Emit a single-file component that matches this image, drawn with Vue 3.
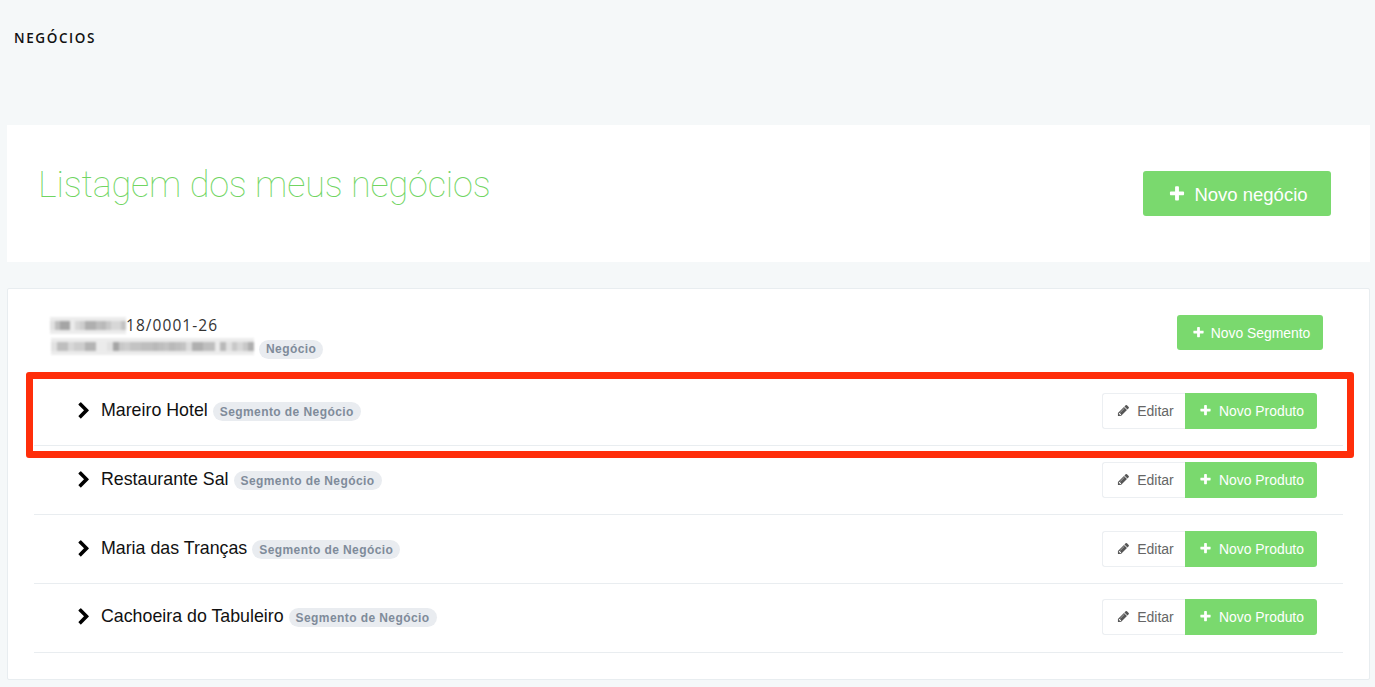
<script setup>
const plus = "M1600 736v192q0 40-28 68t-68 28h-416v416q0 40-28 68t-68 28h-192q-40 0-68-28t-28-68v-416h-416q-40 0-68-28t-28-68v-192q0-40 28-68t68-28h416v-416q0-40 28-68t68-28h192q40 0 68 28t28 68v416h416q40 0 68 28t28 68z";
const pencil = "M491 1536l91-91-235-235-91 91v107h128v128h107zm523-928q0-22-22-22-10 0-17 7l-542 542q-7 7-7 17 0 22 22 22 10 0 17-7l542-542q7-7 7-17zm-54-192l416 416-832 832h-416v-416zm683 96q0 53-37 90l-166 166-416-416 166-165q36-38 90-38 53 0 91 38l235 234q37 39 37 91z";
const chevron = "M1363 877l-742 742q-19 19-45 19t-45-19l-166-166q-19-19-19-45t19-45l531-531-531-531q-19-19-19-45t19-45l166-166q19-19 45-19t45 19l742 742q19 19 19 45t-19 45z";

const segmentos = ["Mareiro Hotel", "Restaurante Sal", "Maria das Tranças", "Cachoeira do Tabuleiro"];

// pixelated redaction, one grey value per block
const blurLine1 = [225, 190, 165, 165, 235, 215, 205, 175, 175, 190, 185, 200, 215, 215, 195];
const blurLine2 = [
  225, 190, 190, 215, 205, 205, 180, 180, 235, 235, 225, 165, 200, 205, 195, 195, 190, 190, 185, 190,
  195, 185, 190, 195, 220, 175, 175, 190, 190, 235, 185, 225, 200, 215, 200, 175,
];

const grey = (v) => ({ background: `rgb(${v},${v},${v})` });
</script>

<template>
  <div class="page">
    <div class="crumb">NEGÓCIOS</div>

    <section class="hero">
      <h1>Listagem dos meus negócios</h1>
      <button class="btn btn-lg">
        <svg viewBox="0 0 1792 1792"><path :d="plus" /></svg>
        <span>Novo negócio</span>
      </button>
    </section>

    <section class="card">
      <header class="biz">
        <div class="biz-info">
          <div class="biz-doc">
            <span class="redact r1"><i v-for="(v, i) in blurLine1" :key="i" :style="grey(v)"></i></span>18/0001-26
          </div>
          <div class="biz-name">
            <span class="redact r2"><i v-for="(v, i) in blurLine2" :key="i" :style="grey(v)"></i></span>
            <span class="tag">Negócio</span>
          </div>
        </div>
        <button class="btn btn-md">
          <svg viewBox="0 0 1792 1792"><path :d="plus" /></svg>
          Novo Segmento
        </button>
      </header>

      <ul class="list">
        <li v-for="s in segmentos" :key="s" class="row">
          <svg class="chev" viewBox="0 0 1792 1792"><path :d="chevron" /></svg>
          <span class="row-name">{{ s }}</span>
          <span class="tag">Segmento de Negócio</span>
          <div class="actions">
            <button class="edit">
              <svg viewBox="0 0 1792 1792"><path :d="pencil" /></svg>
              Editar
            </button>
            <button class="btn btn-sm">
              <svg viewBox="0 0 1792 1792"><path :d="plus" /></svg>
              Novo Produto
            </button>
          </div>
        </li>
      </ul>
    </section>

    <div class="highlight"></div>
  </div>
</template>

<style scoped>
.page {
  position: relative;
  height: 687px;
  overflow: hidden;
  padding: 31px 5px 0 7px;
  box-sizing: border-box;
  background: #f5f8f9;
  font-family: "Liberation Sans", Arial, sans-serif;
}
.crumb {
  margin-left: 7px;
  height: 94px;
  font-family: "Open Sans", sans-serif;
  font-size: 13.5px;
  line-height: 15px;
  font-weight: 600;
  letter-spacing: 1.6px;
  color: #111;
}
.hero {
  height: 137px;
  background: #fff;
  display: flex;
  justify-content: space-between;
  align-items: flex-start;
  padding: 0 39px 0 31px;
  box-sizing: border-box;
}
.hero h1 {
  margin: 38px 0 0;
  font-family: Roboto, sans-serif;
  font-weight: 100;
  font-size: 36px;
  line-height: 45px;
  letter-spacing: -0.16px;
  color: #70d562;
}
.btn {
  display: flex;
  align-items: center;
  justify-content: center;
  border: 0;
  border-radius: 3px;
  background: #7ad96e;
  color: #fff;
  font-family: "Liberation Sans", Arial, sans-serif;
  padding: 0;
}
.btn svg { fill: #fff; }
.btn-lg {
  margin-top: 46px;
  width: 188px;
  height: 45px;
  font-size: 18.5px;
  gap: 8px;
  padding-left: 2px;
}
.btn-lg span { padding-top: 3px; }
.btn-lg svg { width: 18px; height: 18px; }
.btn-md {
  width: 146px;
  height: 35px;
  font-size: 13.9px;
  gap: 6px;
  padding-left: 2px;
}
.btn-md svg { width: 13px; height: 13px; }
.btn-sm {
  width: 132px;
  height: 36px;
  font-size: 13.9px;
  gap: 7px;
  border-radius: 0 3px 3px 0;
  padding-left: 1px;
}
.btn-sm svg { width: 13px; height: 13px; }
.card {
  margin-top: 26px;
  height: 392px;
  box-sizing: border-box;
  background: #fff;
  border: 1px solid #e8edf0;
  border-radius: 2px;
  padding: 0 26px;
}
.biz {
  height: 88px;
  display: flex;
  justify-content: space-between;
  align-items: flex-start;
  padding: 26px 20px 0 16px;
  box-sizing: border-box;
}
.biz-doc {
  display: flex;
  align-items: center;
  height: 20px;
  font-family: "Open Sans", sans-serif;
  font-size: 15.5px;
  letter-spacing: 1.05px;
  color: #333;
}
.biz-name {
  display: flex;
  align-items: center;
  gap: 5px;
  height: 22px;
  margin-top: 2px;
}
.redact {
  display: flex;
  align-items: center;
  height: 17px;
  background: #ececec;
  filter: blur(1.2px);
}
.redact i {
  flex: 1;
  display: block;
  height: 9px;
}
.r1 { width: 76px; }
.r2 { width: 203px; margin-left: 1px; margin-bottom: 4px; }
.tag {
  display: inline-flex;
  align-items: center;
  height: 19px;
  padding: 0 7px;
  border-radius: 10px;
  background: #e9ecf0;
  color: #7f8b9a;
  font-size: 12px;
  font-weight: 700;
  letter-spacing: 0.42px;
  font-family: "Liberation Sans", Arial, sans-serif;
  margin-top: 2px;
}
.list {
  list-style: none;
  margin: 0;
  padding: 0;
}
.row {
  height: 69px;
  box-sizing: border-box;
  border-bottom: 1px solid #e9edf0;
  display: flex;
  align-items: center;
  padding: 0 26px 1px 41px;
}
.row:last-child { padding-bottom: 3px; }
.chev {
  width: 18px;
  height: 18px;
  fill: #000;
  margin-right: 8px;
}
.row-name {
  font-size: 17.8px;
  color: #111;
  margin-right: 5px;
}
.actions {
  margin-left: auto;
  display: flex;
}
.edit {
  display: flex;
  align-items: center;
  justify-content: center;
  gap: 7px;
  width: 83px;
  height: 36px;
  box-sizing: border-box;
  background: #fff;
  border: 1px solid #eceff2;
  border-right: 0;
  border-radius: 3px 0 0 3px;
  color: #666;
  font-family: "Liberation Sans", Arial, sans-serif;
  font-size: 14px;
  padding: 0 0 0 3px;
}
.edit svg { width: 13px; height: 13px; fill: #555; }
.highlight {
  position: absolute;
  left: 26px;
  top: 372px;
  width: 1328px;
  height: 86px;
  box-sizing: border-box;
  border: 7px solid #ff2e0a;
  border-radius: 3px;
  pointer-events: none;
}
</style>

<style>
html, body { margin: 0; background: #f5f8f9; }
</style>
